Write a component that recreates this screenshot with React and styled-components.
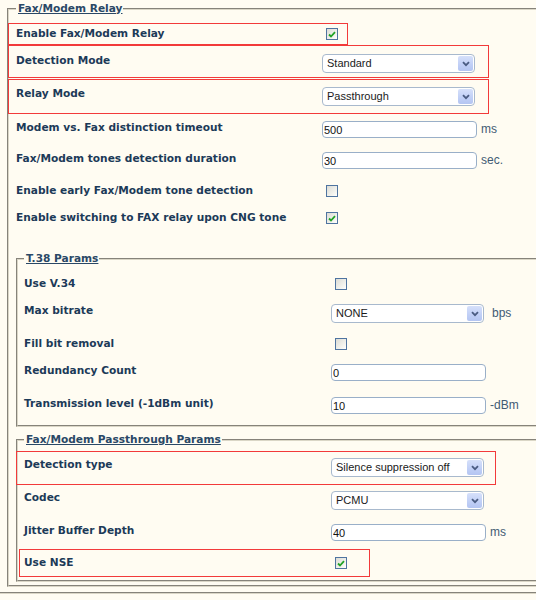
import React from "react";
import styled, { createGlobalStyle } from "styled-components";

const GlobalStyle = createGlobalStyle`
  html, body {
    margin: 0;
    padding: 0;
    background: #fffcf2;
    overflow: hidden;
  }
  body {
    font-family: "DejaVu Sans", Verdana, sans-serif;
  }
`;

const Page = styled.div`
  width: 100%;
  padding-top: 1px;
`;

const Fieldset = styled.fieldset`
  margin: ${(p) => p.$margin};
  padding: ${(p) => p.$padding};
  border: 2px groove #dad6c6;
  border-right: none;
  min-width: 0;
`;

const Legend = styled.legend`
  padding: 0 1px 0 2px;
  font: bold 10.6px/15px "DejaVu Sans", Verdana, sans-serif;
  color: #2a4866;
  text-decoration: underline;
`;

const Divider = styled.div`
  margin-top: 5px;
  border-top: 2px groove #dad6c6;
`;

const Row = styled.div`
  position: relative;
  display: grid;
  grid-template-columns: 306px auto;
  height: ${(p) => p.$h}px;
`;

const Highlight = styled.span`
  position: absolute;
  z-index: 1;
  pointer-events: none;
  box-sizing: border-box;
  border: 1px solid #f23a3a;
  top: ${(p) => p.$box.t}px;
  left: ${(p) => p.$box.l}px;
  width: ${(p) => p.$box.w}px;
  height: ${(p) => p.$box.h}px;
`;

const Label = styled.div`
  padding-top: 3px;
  font: bold 10.6px/15px "DejaVu Sans", Verdana, sans-serif;
  color: #1c3a58;
  white-space: nowrap;
`;

const Control = styled.div`
  display: flex;
  align-items: center;
  align-self: start;
  padding-top: 4px;
  padding-left: ${(p) => p.$indent || 0}px;
`;

const Box = styled.span`
  box-sizing: border-box;
  display: inline-flex;
  align-items: center;
  justify-content: center;
  width: 12px;
  height: 12px;
  margin: 1px 0 0 4px;
  border: 1px solid #4f74a0;
  background: linear-gradient(135deg, #dcdcd6 0%, #f4f4ef 70%, #ffffff 100%);
`;

const SelectBox = styled.div`
  box-sizing: border-box;
  position: relative;
  width: 153px;
  height: 19px;
  border: 1px solid #a8b9cd;
  border-radius: 4px;
  background: #ffffff;
  font: 11px/17px "Liberation Sans", Arial, sans-serif;
  color: #1a1a1a;
  padding-left: 4px;
  white-space: nowrap;
`;

const ArrowButton = styled.span`
  position: absolute;
  top: 1px;
  right: 1px;
  width: 15px;
  height: 15px;
  border-radius: 2px;
  background: linear-gradient(180deg, #d6e0fa 0%, #c0cff6 60%, #b4c5f2 100%);
  display: flex;
  align-items: center;
  justify-content: center;
`;

const TextInput = styled.input`
  box-sizing: border-box;
  width: 155px;
  height: 17px;
  margin: 0;
  padding: 0 1px;
  border: 1px solid #99afc8;
  border-radius: 4px;
  background: #ffffff;
  font: 11px/15px "Liberation Sans", Arial, sans-serif;
  color: #111111;
  outline: none;
`;

const Unit = styled.span`
  margin-left: ${(p) => p.$gap}px;
  font: 12px/15px "Liberation Sans", Arial, sans-serif;
  color: #3f5b74;
`;

function Checkbox({ checked }) {
  return (
    <Box>
      {checked && (
        <svg width="8" height="7" viewBox="0 0 8 7">
          <path d="M1 3.5 L3 5.5 L7 1.2" fill="none" stroke="#21a325" strokeWidth="1.8" />
        </svg>
      )}
    </Box>
  );
}

function Select({ value }) {
  return (
    <SelectBox>
      {value}
      <ArrowButton>
        <svg width="8" height="6" viewBox="0 0 8 6">
          <path d="M1 1.2 L4 4.2 L7 1.2" fill="none" stroke="#4a5c82" strokeWidth="1.8" />
        </svg>
      </ArrowButton>
    </SelectBox>
  );
}

function Field({ row, indent }) {
  return (
    <Row $h={row.h}>
      {row.box && <Highlight $box={row.box} />}
      <Label>{row.label}</Label>
      <Control $indent={indent}>
        {row.kind === "check" && <Checkbox checked={row.checked} />}
        {row.kind === "select" && <Select value={row.value} />}
        {row.kind === "input" && <TextInput readOnly defaultValue={row.value} />}
        {row.unit && <Unit $gap={row.kind === "select" ? 8 : 4}>{row.unit}</Unit>}
      </Control>
    </Row>
  );
}

const relayRows = [
  { label: "Enable Fax/Modem Relay", kind: "check", checked: true, h: 27, box: { t: 0, l: -8, w: 340, h: 22 } },
  { label: "Detection Mode", kind: "select", value: "Standard", h: 33, box: { t: -5, l: -8, w: 481, h: 33 } },
  { label: "Relay Mode", kind: "select", value: "Passthrough", h: 34, box: { t: -4, l: -8, w: 481, h: 35 } },
  { label: "Modem vs. Fax distinction timeout", kind: "input", value: "500", unit: "ms", h: 31 },
  { label: "Fax/Modem tones detection duration", kind: "input", value: "30", unit: "sec.", h: 32 },
  { label: "Enable early Fax/Modem tone detection", kind: "check", h: 27 },
  { label: "Enable switching to FAX relay upon CNG tone", kind: "check", checked: true, h: 27 },
];

const t38Rows = [
  { label: "Use V.34", kind: "check", h: 27 },
  { label: "Max bitrate", kind: "select", value: "NONE", unit: "bps", h: 33 },
  { label: "Fill bit removal", kind: "check", h: 27 },
  { label: "Redundancy Count", kind: "input", value: "0", h: 33 },
  { label: "Transmission level (-1dBm unit)", kind: "input", value: "10", unit: "-dBm", h: 32 },
];

const passthroughRows = [
  { label: "Detection type", kind: "select", value: "Silence suppression off", h: 33, box: { t: -3, l: -8, w: 480, h: 34 } },
  { label: "Codec", kind: "select", value: "PCMU", h: 33 },
  { label: "Jitter Buffer Depth", kind: "input", value: "40", unit: "ms", h: 32 },
  { label: "Use NSE", kind: "check", checked: true, h: 27, box: { t: -3, l: -5, w: 351, h: 28 } },
];

export default function App() {
  return (
    <Page>
      <GlobalStyle />
      <Fieldset $margin="0 0 0 7px" $padding="7px 0 3px 7px">
        <Legend>Fax/Modem Relay</Legend>
        {relayRows.map((r) => (
          <Field key={r.label} row={r} />
        ))}

        <Fieldset $margin="17px 0 0 0" $padding="7px 0 0 6px">
          <Legend>T.38 Params</Legend>
          {t38Rows.map((r) => (
            <Field key={r.label} row={r} indent={1} />
          ))}
        </Fieldset>

        <Fieldset $margin="5px 0 0 0" $padding="7px 0 1px 6px">
          <Legend>Fax/Modem Passthrough Params</Legend>
          {passthroughRows.map((r) => (
            <Field key={r.label} row={r} indent={1} />
          ))}
        </Fieldset>
      </Fieldset>
      <Divider />
    </Page>
  );
}
